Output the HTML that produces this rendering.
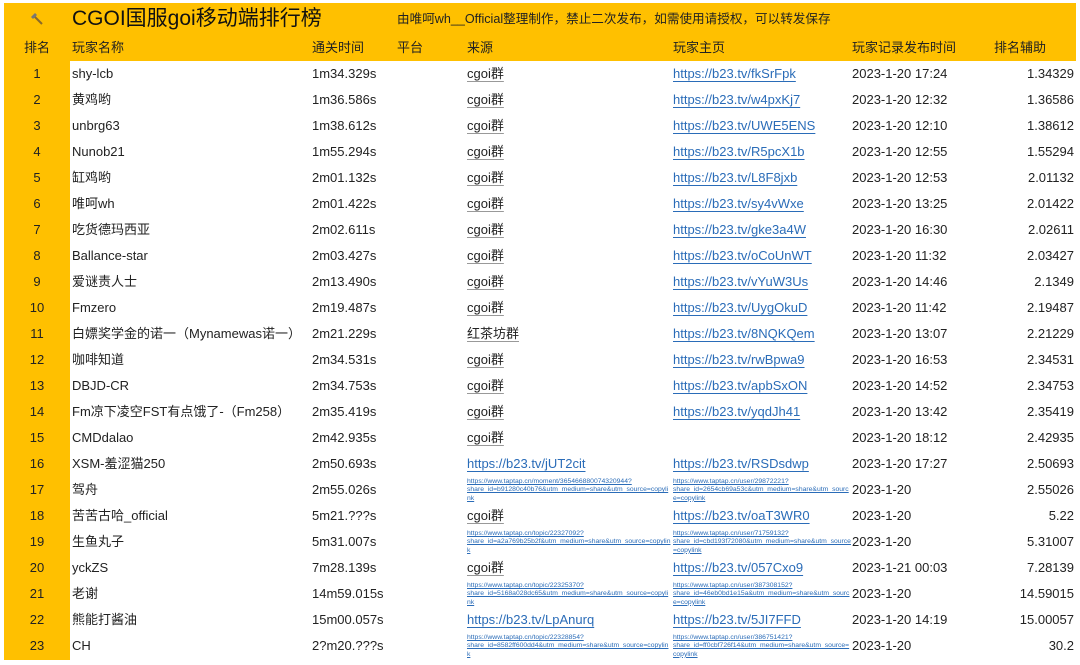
<!DOCTYPE html>
<html><head><meta charset="utf-8"><style>
body{margin:0;width:1080px;height:665px;background:#fff;position:relative;overflow:hidden;font-family:"Liberation Sans","Noto Sans CJK SC",sans-serif;color:#222;font-size:13px}
.hd{position:absolute;left:4px;top:3px;width:1072px;height:58px;background:#FFC000}
.lc{position:absolute;left:4px;top:3px;width:66px;height:657px;background:#FFC000}
.a{position:absolute;white-space:nowrap;line-height:16px}
.r{position:absolute;left:0;width:1080px;height:26px}
.r span{position:absolute;top:5px;white-space:nowrap;line-height:16px;height:16px}
.rk{left:4px;width:66px;text-align:center}
.nm{left:72px}.tm{left:312px}.src{left:467px}.hp{left:673px}.dt{left:852px}.ax{right:6px}
.u{text-decoration:underline;text-decoration-color:#999;text-underline-offset:3px}
.l{color:#2a6cb8;text-decoration:underline;text-underline-offset:3px}
.r span.s{font-size:6.8px;line-height:8.4px;height:26px;top:1px;color:#2a6cb8;text-decoration:underline;white-space:nowrap}
</style></head><body>
<div class="hd"></div><div class="lc"></div>
<svg class="a" style="left:29px;top:11px" width="16" height="16" viewBox="0 0 16 16"><path d="M5 5 L13 13" stroke="#8a6a2a" stroke-width="2"/><path d="M2 6 L6 2 L8 4 L4 8Z" fill="#777"/></svg>
<div class="a" style="left:72px;top:7px;font-size:21px;line-height:24px;color:#111">CGOI国服goi移动端排行榜</div>
<div class="a" style="left:397px;top:11px;font-size:12.6px">由唯呵wh__Official整理制作，禁止二次发布，如需使用请授权，可以转发保存</div>
<div class="a" style="left:4px;width:66px;text-align:center;top:40px">排名</div>
<div class="a" style="left:72px;top:40px">玩家名称</div>
<div class="a" style="left:312px;top:40px">通关时间</div>
<div class="a" style="left:397px;top:40px">平台</div>
<div class="a" style="left:467px;top:40px">来源</div>
<div class="a" style="left:673px;top:40px">玩家主页</div>
<div class="a" style="left:852px;top:40px">玩家记录发布时间</div>
<div class="a" style="left:994px;top:40px">排名辅助</div>

<div class="r" style="top:61px"><span class="rk">1</span><span class="nm">shy-lcb</span><span class="tm">1m34.329s</span><span class="src u">cgoi群</span><span class="hp l">https://b23.tv/fkSrFpk</span><span class="dt">2023-1-20 17:24</span><span class="ax">1.34329</span></div>
<div class="r" style="top:87px"><span class="rk">2</span><span class="nm">黄鸡哟</span><span class="tm">1m36.586s</span><span class="src u">cgoi群</span><span class="hp l">https://b23.tv/w4pxKj7</span><span class="dt">2023-1-20 12:32</span><span class="ax">1.36586</span></div>
<div class="r" style="top:113px"><span class="rk">3</span><span class="nm">unbrg63</span><span class="tm">1m38.612s</span><span class="src u">cgoi群</span><span class="hp l">https://b23.tv/UWE5ENS</span><span class="dt">2023-1-20 12:10</span><span class="ax">1.38612</span></div>
<div class="r" style="top:139px"><span class="rk">4</span><span class="nm">Nunob21</span><span class="tm">1m55.294s</span><span class="src u">cgoi群</span><span class="hp l">https://b23.tv/R5pcX1b</span><span class="dt">2023-1-20 12:55</span><span class="ax">1.55294</span></div>
<div class="r" style="top:165px"><span class="rk">5</span><span class="nm">缸鸡哟</span><span class="tm">2m01.132s</span><span class="src u">cgoi群</span><span class="hp l">https://b23.tv/L8F8jxb</span><span class="dt">2023-1-20 12:53</span><span class="ax">2.01132</span></div>
<div class="r" style="top:191px"><span class="rk">6</span><span class="nm">唯呵wh</span><span class="tm">2m01.422s</span><span class="src u">cgoi群</span><span class="hp l">https://b23.tv/sy4vWxe</span><span class="dt">2023-1-20 13:25</span><span class="ax">2.01422</span></div>
<div class="r" style="top:217px"><span class="rk">7</span><span class="nm">吃货德玛西亚</span><span class="tm">2m02.611s</span><span class="src u">cgoi群</span><span class="hp l">https://b23.tv/gke3a4W</span><span class="dt">2023-1-20 16:30</span><span class="ax">2.02611</span></div>
<div class="r" style="top:243px"><span class="rk">8</span><span class="nm">Ballance-star</span><span class="tm">2m03.427s</span><span class="src u">cgoi群</span><span class="hp l">https://b23.tv/oCoUnWT</span><span class="dt">2023-1-20 11:32</span><span class="ax">2.03427</span></div>
<div class="r" style="top:269px"><span class="rk">9</span><span class="nm">爱谜责人士</span><span class="tm">2m13.490s</span><span class="src u">cgoi群</span><span class="hp l">https://b23.tv/vYuW3Us</span><span class="dt">2023-1-20 14:46</span><span class="ax">2.1349</span></div>
<div class="r" style="top:295px"><span class="rk">10</span><span class="nm">Fmzero</span><span class="tm">2m19.487s</span><span class="src u">cgoi群</span><span class="hp l">https://b23.tv/UygOkuD</span><span class="dt">2023-1-20 11:42</span><span class="ax">2.19487</span></div>
<div class="r" style="top:321px"><span class="rk">11</span><span class="nm">白嫖奖学金的诺一（Mynamewas诺一）</span><span class="tm">2m21.229s</span><span class="src u">红茶坊群</span><span class="hp l">https://b23.tv/8NQKQem</span><span class="dt">2023-1-20 13:07</span><span class="ax">2.21229</span></div>
<div class="r" style="top:347px"><span class="rk">12</span><span class="nm">咖啡知道</span><span class="tm">2m34.531s</span><span class="src u">cgoi群</span><span class="hp l">https://b23.tv/rwBpwa9</span><span class="dt">2023-1-20 16:53</span><span class="ax">2.34531</span></div>
<div class="r" style="top:373px"><span class="rk">13</span><span class="nm">DBJD-CR</span><span class="tm">2m34.753s</span><span class="src u">cgoi群</span><span class="hp l">https://b23.tv/apbSxON</span><span class="dt">2023-1-20 14:52</span><span class="ax">2.34753</span></div>
<div class="r" style="top:399px"><span class="rk">14</span><span class="nm">Fm凉下凌空FST有点饿了-（Fm258）</span><span class="tm">2m35.419s</span><span class="src u">cgoi群</span><span class="hp l">https://b23.tv/yqdJh41</span><span class="dt">2023-1-20 13:42</span><span class="ax">2.35419</span></div>
<div class="r" style="top:425px"><span class="rk">15</span><span class="nm">CMDdalao</span><span class="tm">2m42.935s</span><span class="src u">cgoi群</span><span class="dt">2023-1-20 18:12</span><span class="ax">2.42935</span></div>
<div class="r" style="top:451px"><span class="rk">16</span><span class="nm">XSM-羞涩猫250</span><span class="tm">2m50.693s</span><span class="src l">https://b23.tv/jUT2cit</span><span class="hp l">https://b23.tv/RSDsdwp</span><span class="dt">2023-1-20 17:27</span><span class="ax">2.50693</span></div>
<div class="r" style="top:477px"><span class="rk">17</span><span class="nm">驾舟</span><span class="tm">2m55.026s</span><span class="src s">https://www.taptap.cn/moment/365466880074320944?<br>share_id=b91280c40b76&amp;utm_medium=share&amp;utm_source=copyli<br>nk</span><span class="hp s">https://www.taptap.cn/user/29872221?<br>share_id=2654cb69a53c&amp;utm_medium=share&amp;utm_sourc<br>e=copylink</span><span class="dt">2023-1-20</span><span class="ax">2.55026</span></div>
<div class="r" style="top:503px"><span class="rk">18</span><span class="nm">苦苦古哈_official</span><span class="tm">5m21.???s</span><span class="src u">cgoi群</span><span class="hp l">https://b23.tv/oaT3WR0</span><span class="dt">2023-1-20</span><span class="ax">5.22</span></div>
<div class="r" style="top:529px"><span class="rk">19</span><span class="nm">生鱼丸子</span><span class="tm">5m31.007s</span><span class="src s">https://www.taptap.cn/topic/22327092?<br>share_id=a2a769b25b2f&amp;utm_medium=share&amp;utm_source=copylin<br>k</span><span class="hp s">https://www.taptap.cn/user/71759132?<br>share_id=cbd193f72080&amp;utm_medium=share&amp;utm_source<br>=copylink</span><span class="dt">2023-1-20</span><span class="ax">5.31007</span></div>
<div class="r" style="top:555px"><span class="rk">20</span><span class="nm">yckZS</span><span class="tm">7m28.139s</span><span class="src u">cgoi群</span><span class="hp l">https://b23.tv/057Cxo9</span><span class="dt">2023-1-21 00:03</span><span class="ax">7.28139</span></div>
<div class="r" style="top:581px"><span class="rk">21</span><span class="nm">老谢</span><span class="tm">14m59.015s</span><span class="src s">https://www.taptap.cn/topic/22325370?<br>share_id=5168a028dc65&amp;utm_medium=share&amp;utm_source=copyli<br>nk</span><span class="hp s">https://www.taptap.cn/user/387308152?<br>share_id=46eb0bd1e15a&amp;utm_medium=share&amp;utm_sourc<br>e=copylink</span><span class="dt">2023-1-20</span><span class="ax">14.59015</span></div>
<div class="r" style="top:607px"><span class="rk">22</span><span class="nm">熊能打酱油</span><span class="tm">15m00.057s</span><span class="src l">https://b23.tv/LpAnurq</span><span class="hp l">https://b23.tv/5JI7FFD</span><span class="dt">2023-1-20 14:19</span><span class="ax">15.00057</span></div>
<div class="r" style="top:633px"><span class="rk">23</span><span class="nm">CH</span><span class="tm">2?m20.???s</span><span class="src s">https://www.taptap.cn/topic/22328854?<br>share_id=8582ff600dd4&amp;utm_medium=share&amp;utm_source=copylin<br>k</span><span class="hp s">https://www.taptap.cn/user/386751421?<br>share_id=ff0cbf726f14&amp;utm_medium=share&amp;utm_source=<br>copylink</span><span class="dt">2023-1-20</span><span class="ax">30.2</span></div>
</body></html>
